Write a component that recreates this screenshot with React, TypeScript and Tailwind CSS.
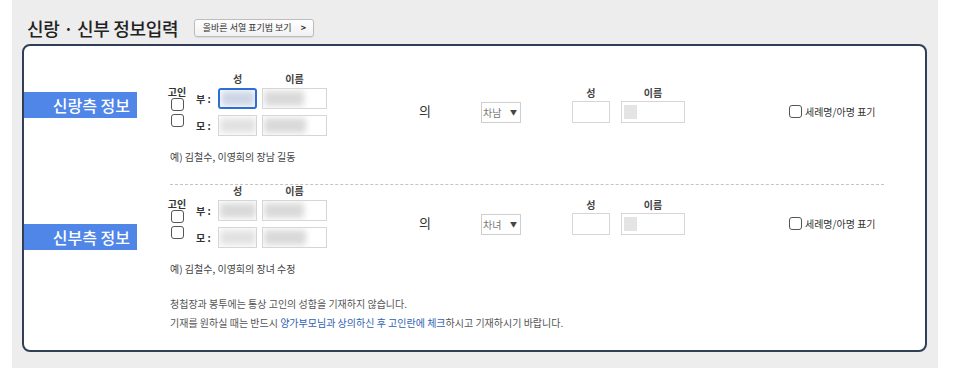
import { ReactNode } from "react";

const FONT = { fontFamily: '"Noto Sans CJK KR", "Liberation Sans", sans-serif' };

const Box = ({
  w,
  focused,
  children,
}: {
  w: string;
  focused?: boolean;
  children?: ReactNode;
}) => (
  <div
    className={`${w} h-[21px] bg-white overflow-hidden flex items-center ${
      focused
        ? "border-2 border-[#2d6fd6] rounded-[3px]"
        : "border border-[#d6d6d6]"
    }`}
  >
    {children}
  </div>
);

const Blur = ({ w, tone = "bg-[#d9d9d9]" }: { w: string; tone?: string }) => (
  <div className={`${w} h-[15px] ${tone} blur-[3px] ml-[1px]`} />
);

const Check = () => (
  <div className="w-[13px] h-[13px] border border-[#555] rounded-[3px] bg-white" />
);

const Section = ({
  label,
  labelTop,
  relation,
  example,
  focused,
}: {
  label: string;
  labelTop: string;
  relation: string;
  example: string;
  focused?: boolean;
}) => (
  <div className="flex">
    <div
      className={`w-[113px] h-[26px] shrink-0 ${labelTop} bg-[#4f86e8] flex items-center justify-end pr-[7px] text-white text-[16px] font-medium`}
    >
      {label}
    </div>
    <div className="ml-[33px]">
      <div className="flex items-start">
        {/* 고인 */}
        <div className="w-[14px] mt-[13px] flex flex-col items-center">
          <span className="whitespace-nowrap text-[10px] leading-[10px] font-bold text-[#333]">
            고인
          </span>
          <div className="mt-[1px] flex flex-col gap-[3px]">
            <Check />
            <Check />
          </div>
        </div>
        {/* parents name */}
        <div className="ml-[12px]">
          <div className="flex h-[14px] pl-[22px] gap-[5px] text-[10px] leading-[10px] font-bold text-[#444]">
            <span className="w-[39px] text-center">성</span>
            <span className="w-[65px] text-center">이름</span>
          </div>
          <div className="flex flex-col gap-[6px]">
            <div className="flex items-center">
              <span className="w-[22px] text-[10px] font-bold text-[#333]">부 :</span>
              <Box w="w-[39px]" focused={focused}>
                <Blur w="w-[38px]" tone={focused ? "bg-[#cdd6e6]" : "bg-[#d9d9d9]"} />
              </Box>
              <div className="ml-[5px]">
                <Box w="w-[65px]">
                  <Blur w="w-[40px]" />
                </Box>
              </div>
            </div>
            <div className="flex items-center">
              <span className="w-[22px] text-[10px] font-bold text-[#333]">모 :</span>
              <Box w="w-[39px]">
                <Blur w="w-[38px]" tone="bg-[#e2e2e2]" />
              </Box>
              <div className="ml-[5px]">
                <Box w="w-[65px]">
                  <Blur w="w-[42px]" />
                </Box>
              </div>
            </div>
          </div>
        </div>
        {/* 의 */}
        <span className="ml-[92px] mt-[29px] text-[13px] leading-[16px] text-[#333]">의</span>
        {/* relation select */}
        <div className="ml-[50px] mt-[28px] w-[40px] h-[21px] border border-[#cfcfcf] bg-white flex items-center justify-between px-[1px]">
          <span className="text-[10px] text-[#777]">{relation}</span>
          <span className="text-[7px] text-[#444] mr-[2px]">▼</span>
        </div>
        {/* child name */}
        <div className="ml-[51px] mt-[14px]">
          <div className="flex h-[13px] gap-[11px] text-[10px] leading-[10px] font-bold text-[#444]">
            <span className="w-[38px] text-center">성</span>
            <span className="w-[64px] text-center">이름</span>
          </div>
          <div className="flex gap-[11px]">
            <div className="w-[38px] h-[22px] border border-[#d6d6d6] bg-white" />
            <div className="w-[64px] h-[22px] border border-[#d6d6d6] bg-white flex items-center">
              <div className="ml-[2px] w-[13px] h-[14px] bg-[#e4e4e4]" />
            </div>
          </div>
        </div>
        {/* baptism */}
        <div className="ml-[104px] mt-[31px] flex items-center gap-[3px]">
          <Check />
          <span className="text-[10px] leading-[13px] text-[#333]">세례명/아명 표기</span>
        </div>
      </div>
      <p className="mt-[14px] text-[10px] leading-[14px] text-[#444]">{example}</p>
    </div>
  </div>
);

export default function App() {
  return (
    <div className="w-[966px] h-[368px] bg-white flex" style={FONT}>
      <div className="ml-[12px] w-[926px] h-[368px] bg-[#ededed] pl-[10px]">
        <div className="flex items-center h-[24px] mt-[16px] pl-[5px]">
          <h2 className="text-[18px] leading-[24px] font-medium text-[#222] tracking-[-0.3px]">
            신랑 · 신부 정보입력
          </h2>
          <button className="ml-[16px] w-[120px] h-[18px] rounded-[3px] border border-[#bdbdbd] bg-gradient-to-b from-white to-[#f1f1f1] shadow-[0_1px_1px_rgba(0,0,0,0.08)] flex items-center justify-center gap-[9px] text-[9px] text-[#333]">
            <span>올바른 서열 표기법 보기</span>
            <span className="font-bold text-[9px]">&gt;</span>
          </button>
        </div>
        <div className="mt-[4px] w-[905px] h-[308px] bg-white border-2 border-[#2f3f58] rounded-[8px] pt-[28px]">
          <Section
            label="신랑측 정보"
            labelTop="mt-[18px]"
            relation="차남"
            example="예) 김철수, 이영희의 장남 길동"
            focused
          />
          <div className="ml-[146px] w-[714px] mt-[20px] border-t border-dashed border-[#c4c4c4]" />
          <div className="mt-[1px]">
            <Section
              label="신부측 정보"
              labelTop="mt-[38px]"
              relation="차녀"
              example="예) 김철수, 이영희의 장녀 수정"
            />
          </div>
          <div className="ml-[146px] mt-[18px] text-[10px] leading-[19px] text-[#555]">
            <p>청첩장과 봉투에는 통상 고인의 성함을 기재하지 않습니다.</p>
            <p>
              기재를 원하실 때는 반드시{" "}
              <span className="text-[#2f62b4]">양가부모님과 상의하신 후 고인란에 체크</span>
              하시고 기재하시기 바랍니다.
            </p>
          </div>
        </div>
      </div>
    </div>
  );
}
